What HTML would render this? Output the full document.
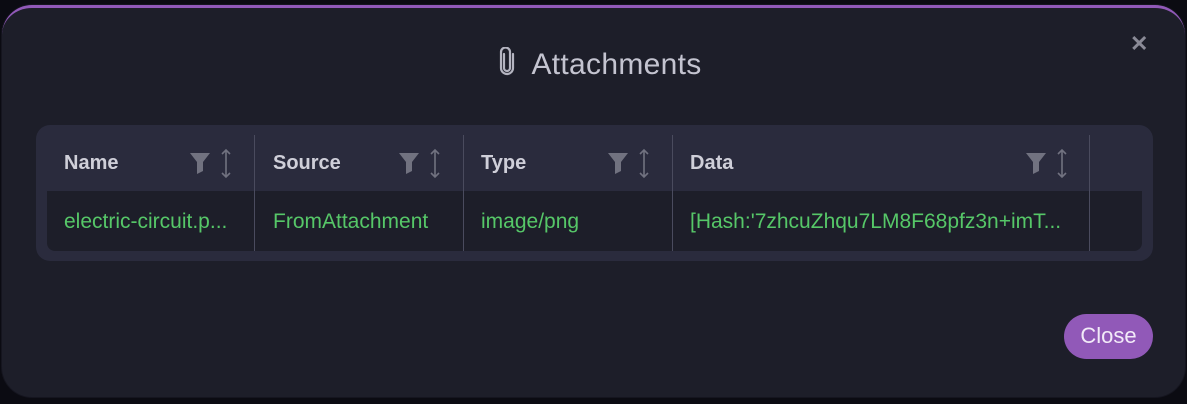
<!DOCTYPE html>
<html><head><style>
*{margin:0;padding:0;box-sizing:border-box}
html,body{width:1187px;height:404px;overflow:hidden}
body{background:#0b0b12;font-family:"Liberation Sans",sans-serif;position:relative}
.modal{position:absolute;left:2px;top:5px;width:1183px;height:392px;background:#1d1e29;border-radius:30px;border-top:3px solid #9159b8;box-shadow:0 0 0 1px #15151f}
.title{position:absolute;left:0;right:0;top:47px;text-align:center;color:#c4c4d0;font-size:30px;letter-spacing:0.3px;padding-left:12px}
.title svg{vertical-align:-3px;margin-right:14px}
.x{position:absolute;left:1130px;top:31px;color:#8a8a96;font-size:22px;font-weight:bold}
.tbl{position:absolute;left:36px;top:125px;width:1117px;height:136px;background:#2a2b3d;border-radius:14px}
.body{position:absolute;left:47px;top:191px;width:1095px;height:60px;background:#1d1e29;border-radius:0 0 8px 8px}
.div{position:absolute;top:135px;height:116px;width:1px;background:#4a4b5e}
.h{position:absolute;top:152px;color:#cfcfd9;font-size:20px;font-weight:bold}
.c{position:absolute;top:210px;color:#56c768;font-size:21px}
.ic{position:absolute;top:148px}
.btn{position:absolute;left:1064px;top:314px;width:89px;height:45px;border-radius:23px;background:#9159b8;color:#f2eaf8;font-size:22px;text-align:center;line-height:44px}
</style></head><body>
<div class="modal"></div>
<div class="title"><svg width="20" height="30" viewBox="0 0 20 30" fill="none" stroke="#b4b4c0" stroke-width="2.2" stroke-linecap="round"><path d="M7 7v14a3 3 0 0 0 6 0V5a4.5 4.5 0 0 0-9 0v16a6 6 0 0 0 12 0V7"/></svg>Attachments</div>
<div class="x">✕</div>
<div class="tbl"></div>
<div class="body"></div>
<div class="div" style="left:254px"></div>
<div class="div" style="left:463px"></div>
<div class="div" style="left:672px"></div>
<div class="div" style="left:1089px"></div>
<div class="h" style="left:64px">Name</div>
<div class="h" style="left:273px">Source</div>
<div class="h" style="left:481px">Type</div>
<div class="h" style="left:690px">Data</div>
<svg class="ic" style="left:189px" width="46" height="32" viewBox="0 0 46 32"><path d="M1 5h20l-7 9v9l-6 3V14z" fill="#717280"/><path d="M37 2v27M33 6l4-4 4 4M33 25l4 4 4-4" stroke="#717280" stroke-width="1.6" fill="none"/></svg>
<svg class="ic" style="left:398px" width="46" height="32" viewBox="0 0 46 32"><path d="M1 5h20l-7 9v9l-6 3V14z" fill="#717280"/><path d="M37 2v27M33 6l4-4 4 4M33 25l4 4 4-4" stroke="#717280" stroke-width="1.6" fill="none"/></svg>
<svg class="ic" style="left:607px" width="46" height="32" viewBox="0 0 46 32"><path d="M1 5h20l-7 9v9l-6 3V14z" fill="#717280"/><path d="M37 2v27M33 6l4-4 4 4M33 25l4 4 4-4" stroke="#717280" stroke-width="1.6" fill="none"/></svg>
<svg class="ic" style="left:1025px" width="46" height="32" viewBox="0 0 46 32"><path d="M1 5h20l-7 9v9l-6 3V14z" fill="#717280"/><path d="M37 2v27M33 6l4-4 4 4M33 25l4 4 4-4" stroke="#717280" stroke-width="1.6" fill="none"/></svg>
<div class="c" style="left:64px">electric-circuit.p...</div>
<div class="c" style="left:273px">FromAttachment</div>
<div class="c" style="left:481px">image/png</div>
<div class="c" style="left:690px">[Hash:'7zhcuZhqu7LM8F68pfz3n+imT...</div>
<div class="btn">Close</div>
</body></html>
